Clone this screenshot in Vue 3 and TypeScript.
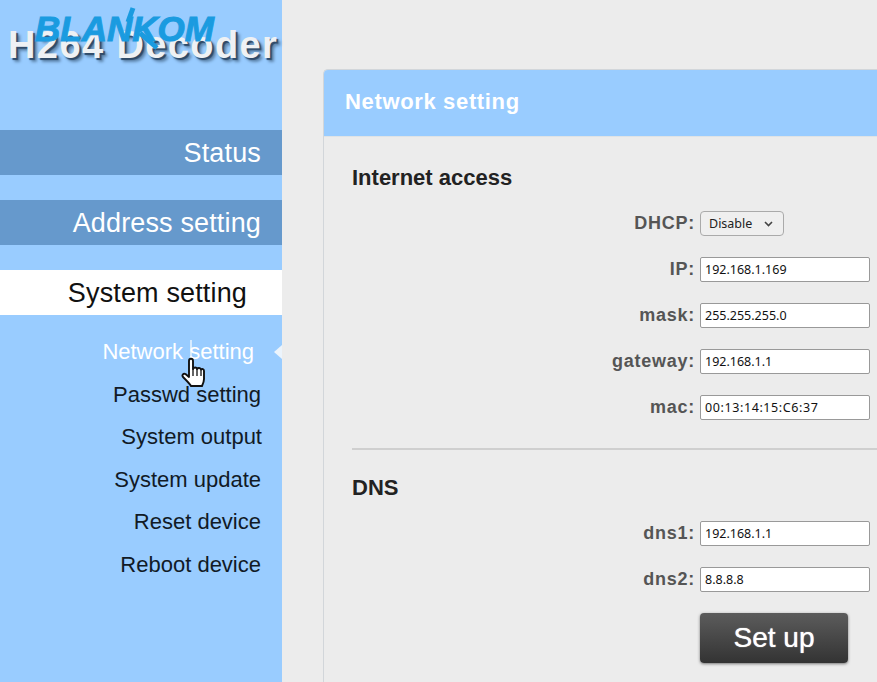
<script setup lang="ts">
const menu = [
  { label: 'Status', cls: 'dim' },
  { label: 'Address setting', cls: 'dim' },
  { label: 'System setting', cls: 'on' },
]
const subs = [
  { label: 'Passwd setting', pad: 21 },
  { label: 'System output', pad: 20 },
  { label: 'System update', pad: 21 },
  { label: 'Reset device', pad: 21 },
  { label: 'Reboot device', pad: 21 },
]
const net = [
  { label: 'IP:', value: '192.168.1.169', cls: '' },
  { label: 'mask:', value: '255.255.255.0', cls: '' },
  { label: 'gateway:', value: '192.168.1.1', cls: '' },
  { label: 'mac:', value: '00:13:14:15:C6:37', cls: 'wide' },
]
const dns = [
  { label: 'dns1:', value: '192.168.1.1' },
  { label: 'dns2:', value: '8.8.8.8' },
]
</script>

<template>
  <div class="page">
    <aside class="side">
      <div class="logo">
        <span class="product">H264 Decoder</span>
        <span class="brand">BLANKOM</span>
        <svg class="swoosh" width="56" height="44" viewBox="0 0 56 44">
          <path d="M29 2L24 16" stroke="#1a9be0" stroke-width="5" fill="none" />
          <path d="M36 27L53 42" stroke="#1a9be0" stroke-width="5" fill="none" />
        </svg>
      </div>
      <nav class="menu">
        <div v-for="m in menu" :key="m.label" class="item" :class="m.cls">{{ m.label }}</div>
      </nav>
      <div class="subs">
        <div class="sub active">
          <span>Network setting</span>
          <i class="caret"></i>
          <svg class="hand" width="26" height="50" viewBox="0 0 26 50">
            <line x1="10" y1="0" x2="10" y2="19" stroke="#fff" stroke-width="1.200" />
            <path d="M8 21c0-3 4-3 4 0v8c1-2 3.500-2 4 0 1-1.500 3.500-1.500 4 .5 1-1 3-.5 3 1.500v8c0 3-1 5-2 7H10c-1-2-4-5-8-9-1.500-2 .5-4 2.500-3L8 37z" fill="#fff" stroke="#111" stroke-width="1.900" stroke-linejoin="round" />
            <path d="M12 29v7M16 29v7M20 30v6" stroke="#111" stroke-width="1.300" fill="none" />
          </svg>
        </div>
        <div v-for="s in subs" :key="s.label" class="sub" :style="{ paddingRight: s.pad + 'px' }">{{ s.label }}</div>
      </div>
    </aside>
    <main class="main">
      <section class="card">
        <h1 class="title">Network setting</h1>
        <div class="body">
          <h2 class="heading">Internet access</h2>
          <div class="rows">
            <div class="row">
              <label>DHCP:</label>
              <div class="select"><span>Disable</span>
                <svg width="9" height="6" viewBox="0 0 9 6"><path d="M1 1l3.500 3.500L8 1" fill="none" stroke="#444" stroke-width="1.600" /></svg>
              </div>
            </div>
            <div v-for="r in net" :key="r.label" class="row">
              <label>{{ r.label }}</label>
              <div class="input" :class="r.cls">{{ r.value }}</div>
            </div>
          </div>
          <hr class="rule" />
          <h2 class="heading dns">DNS</h2>
          <div class="rows dnsrows">
            <div v-for="r in dns" :key="r.label" class="row">
              <label>{{ r.label }}</label>
              <div class="input">{{ r.value }}</div>
            </div>
          </div>
          <button class="submit">Set up</button>
        </div>
      </section>
    </main>
  </div>
</template>

<style>
html, body { margin: 0; overflow: hidden; }
</style>

<style scoped>
.page {
  width: 877px;
  height: 682px;
  display: flex;
  overflow: hidden;
  background: #ececec;
  font-family: "Liberation Sans", Arial, sans-serif;
}
.side {
  width: 282px;
  flex: none;
  background: #99ccff;
  display: flex;
  flex-direction: column;
}
.logo {
  height: 130px;
  position: relative;
}
.brand {
  position: absolute;
  left: 35px;
  top: 9px;
  font-size: 35px;
  font-weight: 700;
  font-style: italic;
  color: #1a9be0;
  -webkit-text-stroke: 1px #1a9be0;
  white-space: nowrap;
}
.swoosh {
  position: absolute;
  left: 104px;
  top: 6px;
}
.product {
  position: absolute;
  left: 8px;
  top: 24px;
  font-size: 38px;
  font-weight: 700;
  letter-spacing: 1.400px;
  color: #eef1f4;
  white-space: nowrap;
  text-shadow: 2px 2px 1px #2f4a68, 4px 4px 3px #5f86ad;
}
.menu {
  display: flex;
  flex-direction: column;
  gap: 25px;
}
.item {
  height: 45px;
  line-height: 46px;
  text-align: right;
  padding-right: 21px;
  font-size: 27px;
  letter-spacing: 0.150px;
  color: #fff;
}
.item.dim { background: #6699cc; }
.item.on { background: #fff; color: #111; padding-right: 35px; }
.subs {
  display: flex;
  flex-direction: column;
  padding-top: 16px;
}
.sub {
  height: 42.500px;
  line-height: 42px;
  text-align: right;
  font-size: 22px;
  color: #111a26;
  position: relative;
}
.sub.active {
  color: #fff;
  padding-right: 28px;
  z-index: 2;
}
.caret {
  position: absolute;
  right: 0;
  top: 14px;
  border: 7px solid transparent;
  border-left-width: 0;
  border-right: 8px solid #ecf4fc;
}
.hand {
  position: absolute;
  left: 181px;
  top: 9px;
}
.main {
  flex: 1;
  padding: 69px 0 0 41px;
  min-width: 0;
}
.card {
  width: 640px;
  border: solid #d2d6da;
  border-width: 1px 0 0 1px;
  border-radius: 5px 0 0 0;
  overflow: hidden;
  box-sizing: border-box;
}
.title {
  margin: 0;
  height: 67px;
  line-height: 64px;
  padding-left: 21px;
  background: #99ccff;
  box-sizing: border-box;
  border-bottom: 1px solid #dfe3e6;
  color: #fff;
  font-size: 22px;
  letter-spacing: 0.650px;
  font-weight: 700;
}
.body {
  padding: 27px 0 0 28px;
  height: 560px;
  box-sizing: border-box;
}
.heading {
  margin: 0;
  font-size: 22px;
  line-height: 28px;
  color: #222;
  font-weight: 700;
}
.rows {
  width: 518px;
  margin-top: 17px;
  display: flex;
  flex-direction: column;
  gap: 17px;
}
.row {
  height: 29px;
  display: flex;
  align-items: center;
  justify-content: flex-end;
  gap: 5px;
}
.row label {
  font-size: 18px;
  font-weight: 700;
  letter-spacing: 0.750px;
  color: #555;
}
.input {
  width: 170px;
  height: 25px;
  box-sizing: border-box;
  border: 1px solid #999;
  border-radius: 2px;
  background: #fff;
  padding-left: 4px;
  font-family: "Noto Sans", "Liberation Sans", sans-serif;
  font-size: 12.500px;
  line-height: 23px;
  color: #111;
}
.input.wide { letter-spacing: 0.600px; }
.select {
  box-sizing: border-box;
  width: 84px;
  height: 25px;
  margin-right: 86px;
  display: flex;
  align-items: center;
  justify-content: space-between;
  border: 1px solid #aaa;
  border-radius: 4px;
  padding: 0 10px 0 8px;
  background: #efefef;
}
.select span {
  font-family: "Noto Sans", "Liberation Sans", sans-serif;
  font-size: 12.500px;
  color: #222;
}
.rule {
  width: 526px;
  margin: 26px 0 0;
  border: 0;
  border-top: 2px solid #cfcfcf;
}
.heading.dns { margin-top: 24px; }
.dnsrows { margin-top: 17px; }
.submit {
  display: block;
  margin: 19px 0 0 348px;
  width: 148px;
  height: 50px;
  border: 0;
  border-radius: 4px;
  background: linear-gradient(#5c5c5c, #333);
  box-shadow: 0 1px 3px rgba(0, 0, 0, 0.500);
  color: #fff;
  font-size: 28px;
  text-shadow: 0 0 1px #fff;
  font-family: "Liberation Sans", Arial, sans-serif;
}
</style>
